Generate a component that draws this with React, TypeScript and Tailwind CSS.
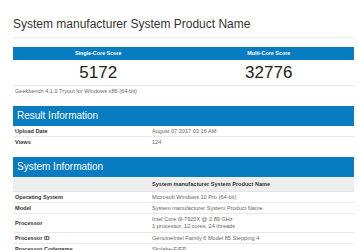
const resultRows = [
  { label: "Upload Date", value: "August 07 2017 03:16 AM" },
  { label: "Views", value: "124" },
];

const systemRows: { label: string; value: string[]; tall?: boolean }[] = [
  { label: "Operating System", value: ["Microsoft Windows 10 Pro (64-bit)"] },
  { label: "Model", value: ["System manufacturer System Product Name"] },
  {
    label: "Processor",
    value: ["Intel Core i9-7920X @ 2.89 GHz", "1 processor, 12 cores, 24 threads"],
    tall: true,
  },
  { label: "Processor ID", value: ["GenuineIntel Family 6 Model 85 Stepping 4"] },
  { label: "Processor Codename", value: ["Skylake-E/EP"] },
];

function SectionBar({ title }: { title: string }) {
  return (
    <div className="flex h-[20px] items-center bg-[#077cc0] pl-[4px] text-[10px] leading-none text-white">
      {title}
    </div>
  );
}

export default function App() {
  return (
    <div className="h-[250px] w-[359px] overflow-hidden bg-white font-['Liberation_Sans',Arial,sans-serif]">
      <div className="ml-[13px] w-[341px] pt-[16px]">
        <h1 className="h-[16px] text-[12px] leading-[16px] text-[#333]">
          System manufacturer System Product Name
        </h1>
        <div className="mt-[5px] border-b border-[#eeeeee]" />

        <div className="mt-[9px] grid grid-cols-2 border-b border-[#e6e6e6]">
          <div className="flex h-[13px] items-center justify-center bg-[#077cc0] text-[5.4px] font-bold text-white">
            Single-Core Score
          </div>
          <div className="flex h-[13px] items-center justify-center bg-[#077cc0] text-[5.4px] font-bold text-white">
            Multi-Core Score
          </div>
          <div className="flex h-[25px] items-center justify-center text-[17px] leading-none text-[#222]">
            5172
          </div>
          <div className="flex h-[25px] items-center justify-center text-[17px] leading-none text-[#222]">
            32776
          </div>
        </div>
        <div className="flex h-[11px] items-center pl-[2px] text-[5.6px] text-[#666]">
          Geekbench 4.1.0 Tryout for Windows x86 (64-bit)
        </div>

        <div className="mt-[9px]">
          <SectionBar title="Result Information" />
          {resultRows.map((r, i) => (
            <div
              key={r.label}
              className={`grid h-[11px] grid-cols-[139px_1fr] items-center text-[5.6px] ${
                i === 0 ? "border-b border-[#e8e8e8]" : ""
              }`}
            >
              <span className="pl-[2px] font-bold text-[#333]">{r.label}</span>
              <span className="text-[#666]">{r.value}</span>
            </div>
          ))}
        </div>

        <div className="mt-[9px]">
          <SectionBar title="System Information" />
          <div className="grid h-[15px] grid-cols-[139px_1fr] items-center border-b border-[#e4e4e4] bg-[#eeeeee] text-[5.6px]">
            <span />
            <span className="font-bold text-[#333]">System manufacturer System Product Name</span>
          </div>
          {systemRows.map((r) => (
            <div
              key={r.label}
              className={`grid grid-cols-[139px_1fr] items-center border-b border-[#e8e8e8] text-[5.6px] leading-[7px] ${
                r.tall ? "h-[19px]" : "h-[11px]"
              }`}
            >
              <span className="pl-[2px] font-bold text-[#333]">{r.label}</span>
              <span className="text-[#666]">
                {r.value.map((v) => (
                  <span key={v} className="block">
                    {v}
                  </span>
                ))}
              </span>
            </div>
          ))}
        </div>
      </div>
    </div>
  );
}
